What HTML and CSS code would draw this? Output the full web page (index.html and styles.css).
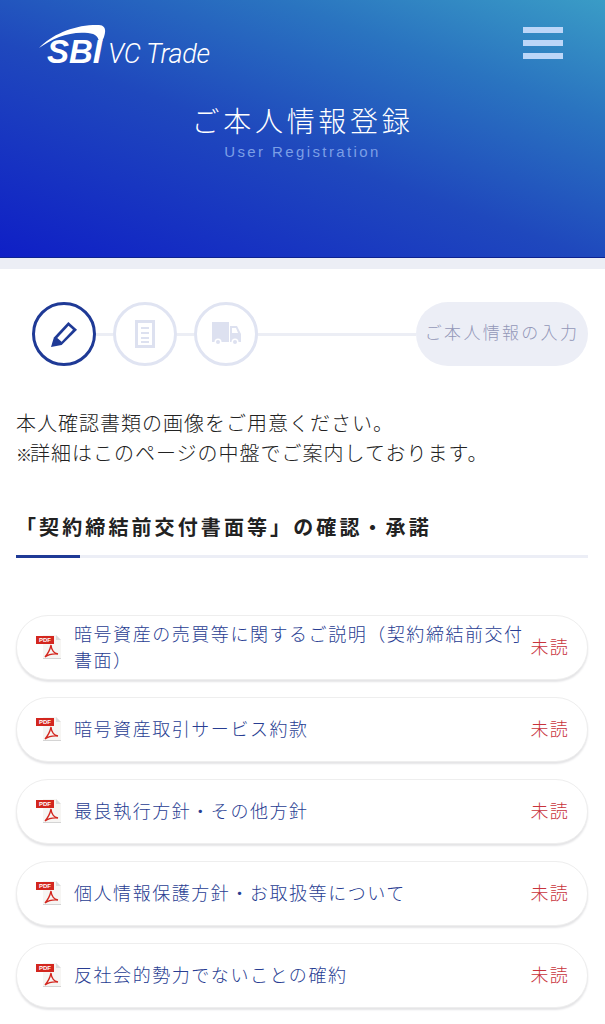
FILE: index.html
```html
<!DOCTYPE html>
<html lang="ja">
<head>
<meta charset="utf-8">
<title>ご本人情報登録</title>
<link rel="stylesheet" href="styles.css">
</head>
<body>
<header class="hero">
  <div class="topbar">
    <div class="logo">
      <svg class="logo-arc" width="70" height="30" viewBox="0 0 70 30"><path d="M0 23C13 9 38 -1 60 0C67 0.500 67 6 65 12L60 23C61 13 58 9 49 8C31 6 14 13 0 23Z" fill="#fff"/></svg>
      <span class="logo-sbi">SBI</span>
      <span class="logo-name">VC Trade</span>
    </div>
    <div class="burger"><i></i><i></i><i></i></div>
  </div>
  <h1 class="title">ご本人情報登録</h1>
  <p class="subtitle">User Registration</p>
</header>
<div class="band"></div>
<main class="content">
  <div class="stepper">
    <div class="step step-active">
      <svg width="27" height="27" viewBox="0 0 28 28"><path d="M0 27L3 17L18 1L27 9L11 25Z" fill="#1f3a96"/><path d="M6.500 17.500L18.200 5L22.800 9.200L11 21.500Z" fill="#fff"/></svg>
    </div>
    <span class="link"></span>
    <div class="step">
      <svg width="20" height="28" viewBox="0 0 20 28"><path d="M1.500 1.500H18.500V26.500H1.500Z" fill="none" stroke="#dde1f0" stroke-width="3"/><path d="M6 8H14M6 13H14M6 18H14M6 22H14" stroke="#dde1f0" stroke-width="2.200"/></svg>
    </div>
    <span class="link"></span>
    <div class="step">
      <svg width="29" height="24" viewBox="0 0 29 24"><path d="M0 0H17V20H0Z" fill="#dde1f0"/><path d="M18 4H25L29 12V20H18Z" fill="#dde1f0"/><path d="M20 6H24L26 11H20Z" fill="#fff"/><circle cx="6" cy="20" r="3.500" fill="#fff"/><circle cx="6" cy="20" r="2" fill="#dde1f0"/><circle cx="23" cy="20" r="3.500" fill="#fff"/><circle cx="23" cy="20" r="2" fill="#dde1f0"/></svg>
    </div>
    <span class="link link-long"></span>
    <div class="step-label">ご本人情報の入力</div>
  </div>

  <p class="lead">本人確認書類の画像をご用意ください。<br><span class="mark">※</span>詳細はこのページの中盤でご案内しております。</p>

  <h2 class="section-title">「契約締結前交付書面等」の確認・承諾</h2>

  <ul class="docs">
    <li class="doc">
      <svg class="pdf" width="25" height="25" viewBox="0 0 25 25"><path d="M7 0H20L25 5V23H7Z" fill="#f6f5f3"/><path d="M7 23H25V24H7Z" fill="#d4d4d4"/><path d="M20 0L25 5H20Z" fill="#dcdcdc"/><rect x="0" y="1" width="18" height="8" fill="#d3261e"/><text x="9" y="7.300" class="pdf-tag">PDF</text><path d="M15 10C15.500 15 17 18 22 19C17 18.500 13 19 9 22C12 18.500 14 15 15 10Z" fill="none" stroke="#d3261e" stroke-width="1.300"/></svg>
      <span class="doc-name">暗号資産の売買等に関するご説明（契約締結前交付書面）</span>
      <span class="doc-state">未読</span>
    </li>
    <li class="doc">
      <svg class="pdf" width="25" height="25" viewBox="0 0 25 25"><path d="M7 0H20L25 5V23H7Z" fill="#f6f5f3"/><path d="M7 23H25V24H7Z" fill="#d4d4d4"/><path d="M20 0L25 5H20Z" fill="#dcdcdc"/><rect x="0" y="1" width="18" height="8" fill="#d3261e"/><text x="9" y="7.300" class="pdf-tag">PDF</text><path d="M15 10C15.500 15 17 18 22 19C17 18.500 13 19 9 22C12 18.500 14 15 15 10Z" fill="none" stroke="#d3261e" stroke-width="1.300"/></svg>
      <span class="doc-name">暗号資産取引サービス約款</span>
      <span class="doc-state">未読</span>
    </li>
    <li class="doc">
      <svg class="pdf" width="25" height="25" viewBox="0 0 25 25"><path d="M7 0H20L25 5V23H7Z" fill="#f6f5f3"/><path d="M7 23H25V24H7Z" fill="#d4d4d4"/><path d="M20 0L25 5H20Z" fill="#dcdcdc"/><rect x="0" y="1" width="18" height="8" fill="#d3261e"/><text x="9" y="7.300" class="pdf-tag">PDF</text><path d="M15 10C15.500 15 17 18 22 19C17 18.500 13 19 9 22C12 18.500 14 15 15 10Z" fill="none" stroke="#d3261e" stroke-width="1.300"/></svg>
      <span class="doc-name">最良執行方針・その他方針</span>
      <span class="doc-state">未読</span>
    </li>
    <li class="doc">
      <svg class="pdf" width="25" height="25" viewBox="0 0 25 25"><path d="M7 0H20L25 5V23H7Z" fill="#f6f5f3"/><path d="M7 23H25V24H7Z" fill="#d4d4d4"/><path d="M20 0L25 5H20Z" fill="#dcdcdc"/><rect x="0" y="1" width="18" height="8" fill="#d3261e"/><text x="9" y="7.300" class="pdf-tag">PDF</text><path d="M15 10C15.500 15 17 18 22 19C17 18.500 13 19 9 22C12 18.500 14 15 15 10Z" fill="none" stroke="#d3261e" stroke-width="1.300"/></svg>
      <span class="doc-name">個人情報保護方針・お取扱等について</span>
      <span class="doc-state">未読</span>
    </li>
    <li class="doc">
      <svg class="pdf" width="25" height="25" viewBox="0 0 25 25"><path d="M7 0H20L25 5V23H7Z" fill="#f6f5f3"/><path d="M7 23H25V24H7Z" fill="#d4d4d4"/><path d="M20 0L25 5H20Z" fill="#dcdcdc"/><rect x="0" y="1" width="18" height="8" fill="#d3261e"/><text x="9" y="7.300" class="pdf-tag">PDF</text><path d="M15 10C15.500 15 17 18 22 19C17 18.500 13 19 9 22C12 18.500 14 15 15 10Z" fill="none" stroke="#d3261e" stroke-width="1.300"/></svg>
      <span class="doc-name">反社会的勢力でないことの確約</span>
      <span class="doc-state">未読</span>
    </li>
  </ul>
</main>
</body>
</html>
```
FILE: styles.css
```css
* { box-sizing: border-box; }
html, body { margin: 0; padding: 0; }
body {
  background: #fff;
  font-family: "Noto Sans CJK JP", "Noto Sans", sans-serif;
  color: #333;
  overflow: hidden;
  height: 1024px;
}

.hero {
  height: 258px;
  padding: 24px 42px 0 39px;
  background: linear-gradient(20deg, #0f1fc6 0%, #1f48bd 45%, #2a74c0 75%, #3a9cc6 100%);
  border-bottom: 1px solid #0d2390;
  color: #fff;
}
.topbar { display: flex; justify-content: space-between; align-items: flex-start; }
.logo { position: relative; display: flex; align-items: baseline; height: 44px; padding: 13px 0 0 8px; }
.logo-arc { position: absolute; left: 0; top: 1px; }
.logo-sbi {
  font: italic 700 33px/30px "Liberation Sans", sans-serif;
  letter-spacing: 0;
  margin-right: 6px;
}
.logo-name {
  font: italic 300 27px/30px Roboto, "Liberation Sans", sans-serif;
  letter-spacing: -0.300px;
}
.burger { display: flex; flex-direction: column; gap: 7px; padding-top: 3px; }
.burger i { display: block; width: 40px; height: 6px; background: #bcd6f8; }
.title {
  margin: 30px -42px 0 -39px;
  text-align: center;
  font-size: 28px;
  font-weight: 300;
  line-height: 44px;
  letter-spacing: 3.700px;
}
.subtitle {
  margin: 0 -42px 0 -39px;
  text-align: center;
  font: 400 15px/20px "Liberation Sans", sans-serif;
  letter-spacing: 2.400px;
  color: #7c9fe6;
}
.band { height: 11px; background: #eceef5; }

.content { padding: 33px 17px 0 16px; }
.stepper { display: flex; align-items: center; padding-left: 16px; }
.step {
  width: 64px;
  height: 64px;
  flex: none;
  display: flex;
  align-items: center;
  justify-content: center;
  border: 3px solid #e0e4f2;
  border-radius: 50%;
}
.step-active { border-color: #1f3a96; }
.link { flex: none; width: 17px; height: 3px; background: #eceef5; }
.link-long { flex: 1; }
.step-label {
  width: 172px;
  height: 64px;
  flex: none;
  display: flex;
  align-items: center;
  justify-content: center;
  padding-bottom: 6px;
  border-radius: 32px;
  background: #eceef6;
  color: #9397b8;
  font-size: 17px;
  font-weight: 300;
  letter-spacing: 2.300px;
}
.lead {
  margin: 42px 0 0;
  font-size: 20px;
  font-weight: 300;
  line-height: 30px;
  letter-spacing: 1px;
  color: #222;
}
.mark { font-size: 16px; font-weight: 500; letter-spacing: -2px; }
.section-title {
  margin: 43px 0 0;
  padding-bottom: 13px;
  font-size: 20px;
  font-weight: 700;
  line-height: 30px;
  letter-spacing: 3.100px;
  color: #222;
  border-bottom: 3px solid #eceef6;
  position: relative;
}
.section-title::after {
  content: "";
  position: absolute;
  left: 0;
  bottom: -3px;
  width: 64px;
  height: 3px;
  background: #1f3a96;
}
.docs { list-style: none; margin: 57px 0 0; padding: 0; display: flex; flex-direction: column; gap: 17px; }
.doc {
  display: flex;
  align-items: center;
  height: 65px;
  padding: 0 18px 0 19px;
  border: 1px solid #eeeeee;
  border-radius: 32px;
  box-shadow: 0 2px 2px #e4e4e6;
  background: #fff;
}
.pdf { flex: none; margin-right: 13px; }
.pdf-tag { font: 700 6px "Liberation Sans", sans-serif; fill: #fff; text-anchor: middle; }
.doc-name {
  flex: 1;
  padding-bottom: 3px;
  font-size: 18px;
  font-weight: 300;
  line-height: 26px;
  letter-spacing: 1.550px;
  color: #283d92;
}
.doc-state {
  flex: none;
  margin-left: 4px;
  padding-bottom: 4px;
  font-size: 18px;
  font-weight: 300;
  letter-spacing: 1.200px;
  color: #c8343c;
}
```
